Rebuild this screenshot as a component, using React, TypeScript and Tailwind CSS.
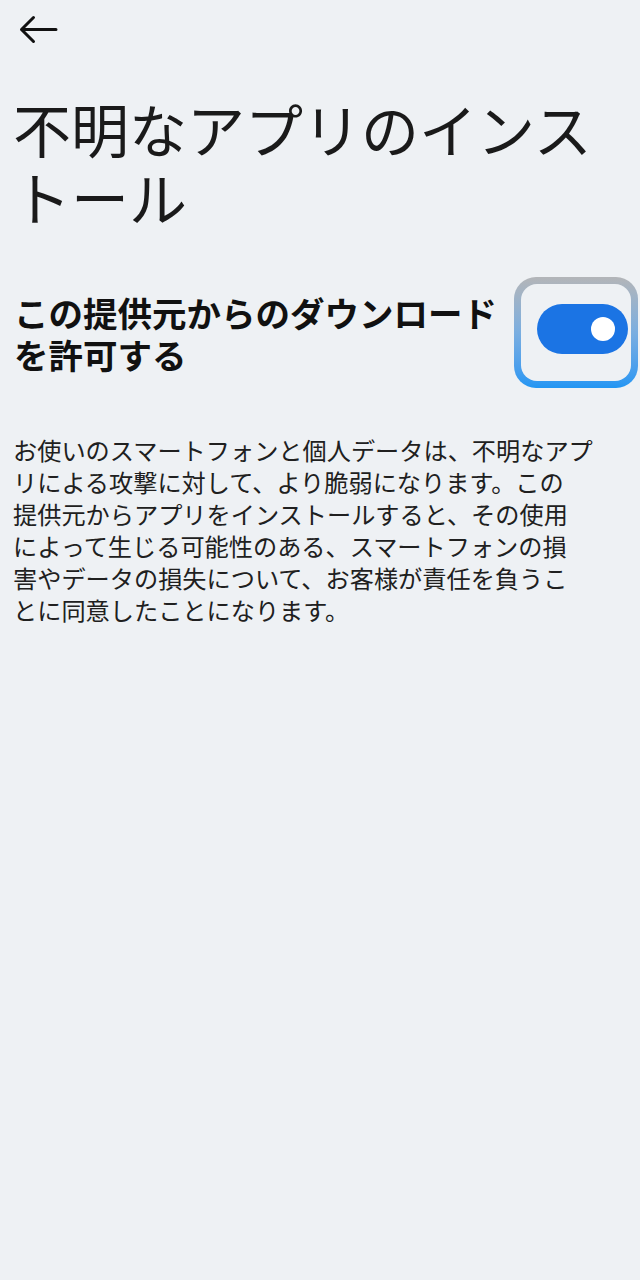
import React from 'react'

const BODY_LINES = [
  'お使いのスマートフォンと個人データは、不明なアプ',
  'リによる攻撃に対して、より脆弱になります。この',
  '提供元からアプリをインストールすると、その使用',
  'によって生じる可能性のある、スマートフォンの損',
  '害やデータの損失について、お客様が責任を負うこ',
  'とに同意したことになります。',
]

function BackArrow() {
  return (
    <svg width="40" height="32" viewBox="0 0 40 32" fill="none">
      <path
        d="M38 14.5H3.5M15.5 2.5L3.5 14.5L15.5 26.5"
        stroke="#111"
        strokeWidth="3"
        strokeLinecap="round"
        strokeLinejoin="round"
      />
    </svg>
  )
}

function Toggle() {
  return (
    <div className="w-[124px] h-[111px] rounded-[22px] p-[7px] bg-gradient-to-b from-[#b3b5b8] via-[#7aaee0] to-[#2196f3] shrink-0">
      <div className="w-full h-full rounded-[16px] bg-[#eef1f4] pl-[16px] pt-[20px]">
        <div className="w-[91px] h-[50px] rounded-full bg-[#1b74e4] flex items-center justify-end pr-[13px]">
          <div className="w-[24px] h-[24px] rounded-full bg-white" />
        </div>
      </div>
    </div>
  )
}

export default function App() {
  return (
    <div
      className="min-h-[1280px] w-[640px] bg-[#eef1f4] text-[#1a1a1a]"
      style={{ fontFamily: '"Noto Sans CJK JP", "Noto Sans", sans-serif' }}
    >
      {/* header */}
      <div className="h-[60px] pl-[18px] pt-[15px]">
        <BackArrow />
      </div>

      {/* title */}
      <h1 className="mt-[34px] pl-[13px] text-[58px] leading-[68px] font-normal whitespace-nowrap">
        <span className="block">不明なアプリのインス</span>
        <span className="block">トール</span>
      </h1>

      {/* toggle row */}
      <div className="mt-[47px] flex items-center justify-between pl-[14px] pr-[2px]">
        <p className="text-[34.5px] leading-[42px] font-bold whitespace-nowrap text-[#111]">
          <span className="block">この提供元からのダウンロード</span>
          <span className="block">を許可する</span>
        </p>
        <Toggle />
      </div>

      {/* description */}
      <div className="mt-[46px] pl-[13px] text-[24.2px] leading-[32px] text-[#202020] whitespace-nowrap">
        {BODY_LINES.map((line) => (
          <span key={line} className="block">
            {line}
          </span>
        ))}
      </div>
    </div>
  )
}
